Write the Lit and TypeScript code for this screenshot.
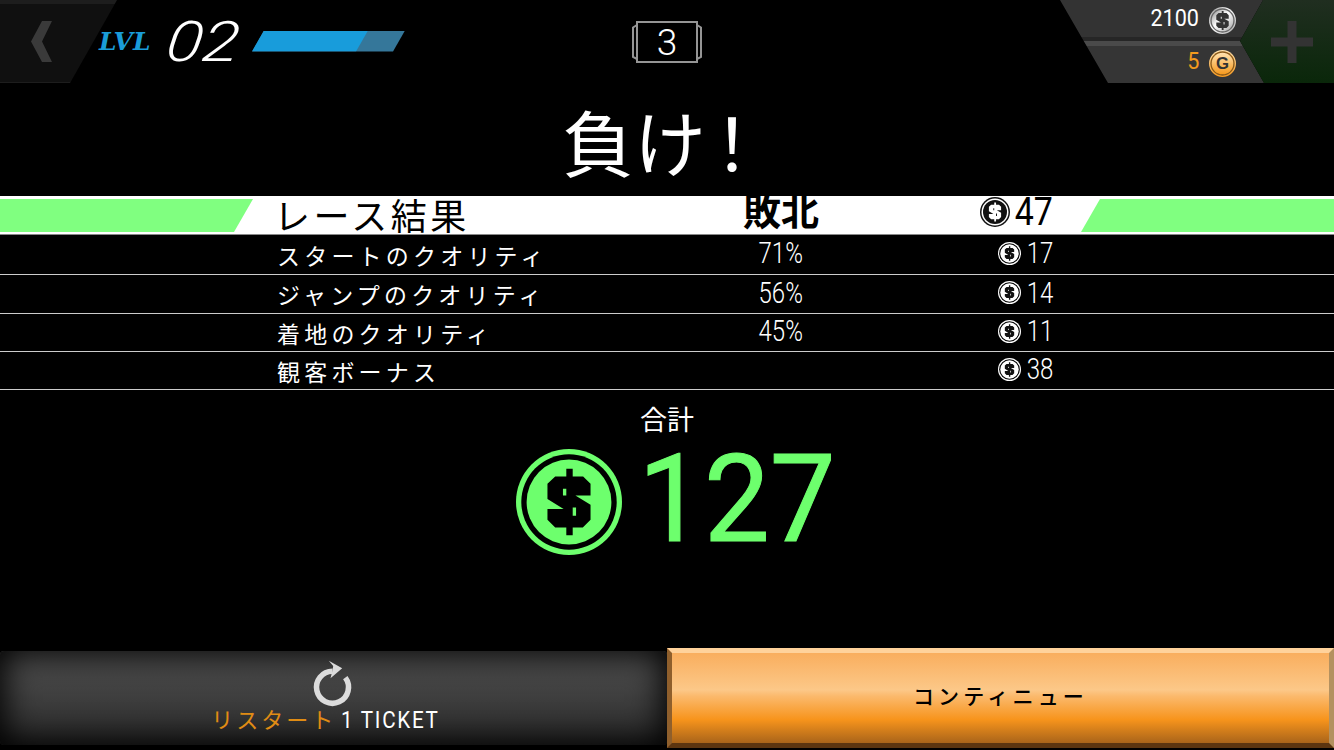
import { LitElement, css, html, svg } from 'lit';
import { customElement } from 'lit/decorators.js';

const DOLLAR =
  'M45 38H78V15H97V38H128L150 60V95H105L150 122V167L127 190H97V213H78V190H45L22 167V135H70L22 105V60Z' +
  'M68 75V95H78V75ZM97 130V155H107V130Z';

type CoinTone = { ring: string; gap: string; disc: string; sign: string; scale: number };

const TONES: Record<string, CoinTone> = {
  light: { ring: '#fff', gap: '#000', disc: '#fff', sign: '#111', scale: 0.3175 },
  dark: { ring: '#111', gap: '#fff', disc: '#111', sign: '#fff', scale: 0.3175 },
  green: { ring: '#6dff6d', gap: '#000', disc: '#6dff6d', sign: '#000', scale: 0.3175 },
  silver: { ring: 'url(#silver)', gap: '#666', disc: 'url(#silver)', sign: '#333', scale: 0.36 },
  gold: { ring: 'url(#gold)', gap: '#8a5a1a', disc: 'url(#gold)', sign: '#333', scale: 0.36 },
};

function coin(size: number, tone: string, letter = '') {
  const t = TONES[tone];
  return html`<svg class="coin" width=${size} height=${size} viewBox="0 0 100 100">
    <defs>
      <linearGradient id="silver" x1="0" y1="0" x2="1" y2="1">
        <stop offset="0" stop-color="#8c8c8c" />
        <stop offset=".45" stop-color="#fff" />
        <stop offset="1" stop-color="#a4a4a4" />
      </linearGradient>
      <linearGradient id="gold" x1="0" y1="0" x2="0" y2="1">
        <stop offset="0" stop-color="#ffe2b0" />
        <stop offset="1" stop-color="#f79a1e" />
      </linearGradient>
    </defs>
    <circle cx="50" cy="50" r="50" fill=${t.ring} />
    <circle cx="50" cy="50" r="45" fill=${t.gap} />
    <circle cx="50" cy="50" r="40" fill=${t.disc} />
    ${letter
      ? svg`<text x="50" y="72" text-anchor="middle" font-family="'Liberation Sans', sans-serif" font-weight="700" font-size="62" fill=${t.sign}>${letter}</text>`
      : svg`<path transform="translate(50 50) scale(${t.scale}) translate(-86 -114)" fill-rule="evenodd" fill=${t.sign} d=${DOLLAR} />`}
  </svg>`;
}

const ROWS = [
  { label: 'スタートのクオリティ', value: '71%', amount: '17' },
  { label: 'ジャンプのクオリティ', value: '56%', amount: '14' },
  { label: '着地のクオリティ', value: '45%', amount: '11' },
  { label: '観客ボーナス', value: '', amount: '38' },
];

@customElement('app-root')
export class AppRoot extends LitElement {
  render() {
    return html`
      <header class="hud">
        <div class="hud-left">
          <div class="back">
            <svg width="60" height="83" viewBox="0 0 60 83"><path fill="#3a3a3a" d="M42 21H52L42 41.5L52 62H42L31 41.5Z" /></svg>
          </div>
          <span class="lvl">LVL</span>
          <span class="level">02</span>
          <div class="xp"><div class="xp-fill"></div></div>
        </div>
        <div class="round">
          <svg width="70" height="42" viewBox="0 0 70 42">
            <path fill="none" stroke="#959595" stroke-width="2" d="M5 1H65V41H5Z" />
            <path fill="none" stroke="#959595" stroke-width="2" d="M5 4L1 6.500V36L5 38M65 4L69 6.500V36L65 38" />
          </svg>
          <span class="round-num">3</span>
        </div>
        <div class="hud-right">
          <div class="wallet">
            <div class="wallet-row"><span class="wallet-num">2100</span>${coin(27, 'silver')}</div>
            <div class="wallet-row gold"><span class="wallet-num">5</span>${coin(27, 'gold', 'G')}</div>
          </div>
          <div class="plus">
            <svg width="42" height="42" viewBox="0 0 42 42"><path fill="#333" d="M16.500 0H25.500V16.500H42V25.500H25.500V42H16.500V25.500H0V16.500H16.500Z" /></svg>
          </div>
        </div>
      </header>

      <h1 class="title">負け<span class="bang">！</span></h1>

      <section class="results">
        <div class="row head">
          <span class="label">レース結果</span>
          <span class="value">敗北</span>
          <span class="amount">${coin(30, 'dark')}<span class="num">47</span></span>
        </div>
        ${ROWS.map(
          (r) => html`<div class="row">
            <span class="label">${r.label}</span>
            <span class="value"><span class="num">${r.value}</span></span>
            <span class="amount">${coin(23, 'light')}<span class="num">${r.amount}</span></span>
          </div>`
        )}
      </section>

      <section class="total">
        <div class="total-label">合計</div>
        <div class="total-sum">${coin(106, 'green')}<span class="total-num">127</span></div>
      </section>

      <footer class="actions">
        <button class="restart">
          <svg width="60" height="45" viewBox="0 0 60 45">
            <path fill="none" stroke="#dcdcdc" stroke-width="5.500" d="M41.300 16.700A16 16 0 1 1 28.500 10.300" />
            <path fill="#dcdcdc" d="M24.800 -0.300L38.200 7.300L26.500 17.300L28.200 10.700L29.200 5Z" />
          </svg>
          <span class="restart-text"><span class="orange">リスタート</span><span class="ticket">1 TICKET</span></span>
        </button>
        <button class="continue">コンティニュー</button>
      </footer>
    `;
  }

  static styles = css`
    :host {
      display: flex;
      flex-direction: column;
      width: 1334px;
      height: 750px;
      overflow: hidden;
      background: #000;
      color: #fff;
      font-family: 'Roboto', 'Noto Sans CJK JP', sans-serif;
    }

    .hud {
      display: grid;
      grid-template-columns: 632px 70px 1fr;
      height: 83px;
      flex: none;
    }

    .hud-left {
      display: flex;
      align-items: center;
    }

    .back {
      width: 117px;
      height: 83px;
      flex: none;
      clip-path: polygon(0 0, 117px 0, 70px 83px, 0 83px);
      background: linear-gradient(#1d1d1d 0 4px, #101010 4px 82px, #1d1d1d 82px);
    }

    .lvl {
      width: 68px;
      margin-left: -18px;
      font: italic 700 24px 'DejaVu Serif', serif;
      color: #1a9cd8;
      transform: scaleX(1.04);
      transform-origin: left center;
    }

    .level {
      width: 85px;
      font: italic 300 56px 'Roboto', sans-serif;
      transform: skewX(-8deg) scaleX(1.2);
      transform-origin: left center;
    }

    .xp {
      width: 153px;
      height: 21px;
      margin-top: -1px;
      background: #35779a;
      clip-path: polygon(12px 0, 153px 0, 141px 21px, 0 21px);
    }

    .xp-fill {
      width: 116px;
      height: 21px;
      background: #189cdb;
      clip-path: polygon(0 0, 116px 0, 104px 21px, 0 21px);
    }

    .round {
      position: relative;
      margin-top: 21px;
      height: 42px;
    }

    .round svg {
      display: block;
    }

    .round-num {
      position: absolute;
      inset: 0;
      display: flex;
      align-items: center;
      justify-content: center;
      font-size: 37px;
      font-weight: 300;
    }

    .hud-right {
      display: flex;
      justify-content: flex-end;
    }

    .wallet {
      width: 204px;
      height: 83px;
      clip-path: polygon(0 0, 203px 0, 180px 41px, 204px 83px, 48px 83px);
      background: linear-gradient(#333 0 37px, #262626 37px 41px, #4a4a4a 41px 46px, #353535 46px);
    }

    .wallet-row {
      display: flex;
      align-items: center;
      justify-content: flex-end;
      gap: 10px;
      height: 41px;
      padding-right: 28px;
      font-size: 24px;
    }

    .wallet-row.gold {
      height: 44px;
      color: #f39a1e;
    }

    .wallet-num {
      margin-top: -5px;
      transform: scaleX(0.9);
      transform-origin: right center;
    }

    .coin {
      display: block;
      flex: none;
    }

    .plus {
      display: flex;
      align-items: center;
      justify-content: flex-end;
      width: 94px;
      height: 83px;
      margin-left: -24px;
      padding-right: 21px;
      box-sizing: border-box;
      clip-path: polygon(23px 0, 94px 0, 94px 83px, 24px 83px, 0 41px);
      background: linear-gradient(#202e20, #0a270a);
    }

    .title {
      height: 113px;
      margin: 0;
      padding-right: 22px;
      flex: none;
      text-align: center;
      font: 400 72px/113px 'Noto Sans CJK JP', sans-serif;
    }

    .bang {
      margin-left: 8px;
      font-feature-settings: 'palt';
    }

    .row {
      position: relative;
      display: grid;
      grid-template-columns: 400px 208px 168px;
      align-items: center;
      height: 37px;
      padding-left: 277px;
      border-bottom: 1px solid #ccc;
    }

    .row:nth-child(2),
    .row:nth-child(3) {
      height: 38px;
    }

    .row:nth-child(2) {
      height: 39px;
    }

    .row.head {
      height: 38px;
      background: #fff;
      color: #000;
      border-bottom-color: #888;
    }

    .row.head::before,
    .row.head::after {
      content: '';
      position: absolute;
      top: 3px;
      height: 33px;
      background: #80ff80;
    }

    .row.head::before {
      left: 0;
      width: 253px;
      clip-path: polygon(0 0, 253px 0, 234px 33px, 0 33px);
    }

    .row.head::after {
      right: 0;
      width: 253px;
      clip-path: polygon(19px 0, 253px 0, 253px 33px, 0 33px);
    }

    .label {
      font: 400 23px/32px 'Noto Sans CJK JP', sans-serif;
      letter-spacing: 4.2px;
    }

    .head .label {
      font-size: 36px;
      letter-spacing: 3.5px;
      line-height: 38px;
      margin: -2px 0 0 -3px;
    }

    .value {
      text-align: center;
      margin-top: -3px;
    }

    .head .value {
      font: 700 38px/38px 'Noto Sans CJK JP', sans-serif;
      margin-top: -13px;
    }

    .amount {
      display: flex;
      align-items: center;
      justify-content: flex-end;
      margin-top: -3px;
      gap: 5px;
    }

    .head .amount {
      margin-top: -7px;
    }

    .num {
      display: inline-block;
      font: 300 30px/30px 'Roboto', sans-serif;
      transform: scaleX(0.8);
      transform-origin: center;
    }

    .amount .num {
      transform-origin: right center;
      margin-left: -6px;
    }

    .head .amount .num {
      font-size: 39px;
      font-weight: 400;
      transform: scaleX(0.87);
    }

    .total {
      display: flex;
      flex-direction: column;
      align-items: center;
      flex: 1;
    }

    .total-label {
      margin-top: 12px;
      font: 400 27px/34px 'Noto Sans CJK JP', sans-serif;
    }

    .total-sum {
      display: flex;
      align-items: flex-start;
      gap: 18px;
      color: #6dff6d;
      margin: 13px 0 0 17px;
    }

    .total-num {
      margin: -3px 0 0 -10px;
      font: 400 122px/108px 'Roboto', sans-serif;
      -webkit-text-stroke: 1px #6dff6d;
      transform: scaleX(0.96);
      transform-origin: right center;
    }

    .actions {
      display: flex;
      align-items: flex-end;
      height: 102px;
      flex: none;
    }

    button {
      font-family: inherit;
      border: 0;
      padding: 0;
      color: inherit;
    }

    .restart {
      display: flex;
      flex-direction: column;
      align-items: center;
      width: 667px;
      height: 94px;
      margin-bottom: 5px;
      padding-top: 10px;
      box-sizing: border-box;
      border-radius: 4px;
      background: linear-gradient(#525252, #2a2a2a);
      box-shadow: inset 0 0 32px 4px #000;
    }

    .restart svg {
      display: block;
      margin-bottom: -2px;
      overflow: visible;
    }

    .restart-text {
      display: flex;
      align-items: center;
      gap: 5px;
      margin-top: 2px;
      padding-right: 16px;
      font: 400 22px/26px 'Noto Sans CJK JP', sans-serif;
    }

    .orange {
      margin-top: -4px;
      color: #e08c14;
      letter-spacing: 3px;
    }

    .ticket {
      margin-right: -16px;
      font: 400 24px 'Roboto', sans-serif;
      letter-spacing: 2px;
      transform: scaleX(0.86);
      transform-origin: left center;
    }

    .continue {
      width: 667px;
      height: 100px;
      margin-bottom: 2px;
      padding-bottom: 6px;
      box-sizing: border-box;
      border-style: solid;
      border-width: 5px;
      border-color: #ffd29b #b4915f #5c3510 #8f5f2c;
      background: linear-gradient(#f9ae5e, #fcc888 41%, #fbb96c 48%, #f7941c 74%, #a9641a);
      color: #000;
      font: 500 21px 'Noto Sans CJK JP', sans-serif;
      letter-spacing: 4.200px;
    }
  `;
}
